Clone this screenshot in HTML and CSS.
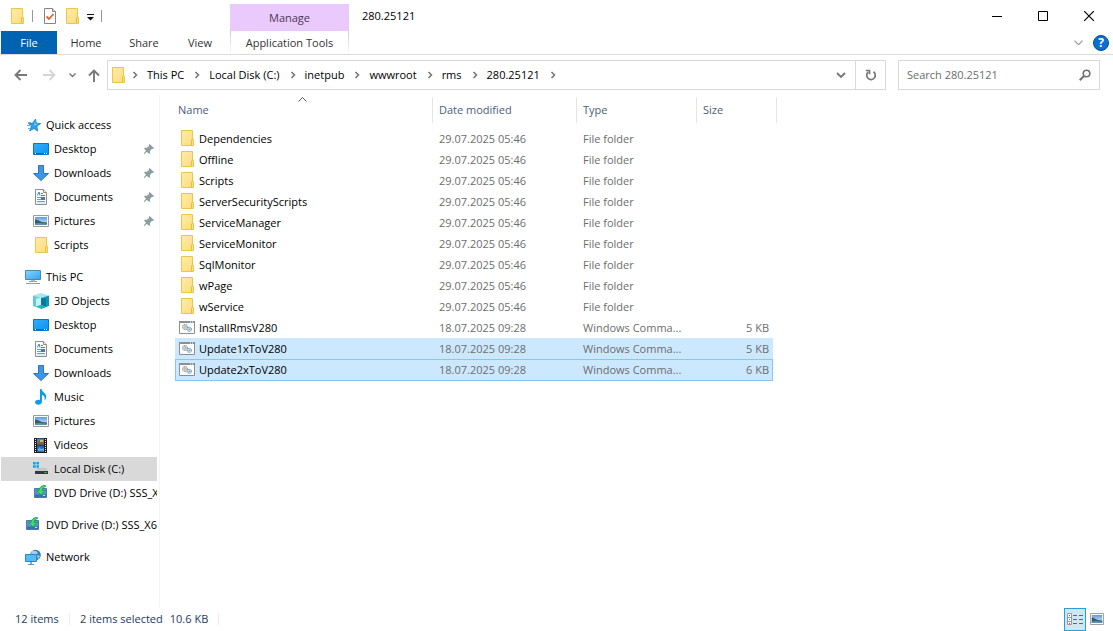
FILE: index.html
```html
<!DOCTYPE html>
<html lang="en">
<head>
<meta charset="utf-8">
<meta name="viewport" content="width=device-width, initial-scale=1">
<title>280.25121</title>
<link rel="stylesheet" href="styles.css">
</head>
<body>
<svg class="sprite" aria-hidden="true">
  <defs>
    <linearGradient id="g-folder" x1="0" y1="0" x2="1" y2="1"><stop offset="0" stop-color="#ffeba8"/><stop offset="1" stop-color="#fddd7b"/></linearGradient>
    <linearGradient id="g-blue" x1="0" y1="0" x2="1" y2="1"><stop offset="0" stop-color="#35aef7"/><stop offset="1" stop-color="#0a93f5"/></linearGradient>
    <linearGradient id="g-screen" x1="0" y1="0" x2="1" y2="1"><stop offset="0" stop-color="#8fd6ff"/><stop offset="1" stop-color="#2ba4ef"/></linearGradient>
    <linearGradient id="g-sky" x1="0" y1="0" x2="0" y2="1"><stop offset="0" stop-color="#5b9be0"/><stop offset="1" stop-color="#e3f1fb"/></linearGradient>
  </defs>
  <symbol id="folder" viewBox="0 0 16 16">
    <path d="M2.500.5h11v9h1v6h-12z" fill="url(#g-folder)" stroke="#ebc64f"/>
    <path d="M12.500 15V10l1-1" fill="none" stroke="#e6bd46"/>
  </symbol>
  <symbol id="cmd" viewBox="0 0 16 16">
    <path d="M.5 2.500h15v12H.5z" fill="#fff" stroke="#8a8f94"/>
    <path d="M0 2h16v2H0z" fill="#8a8f94"/><path d="M11 2.500h1v1h-1zM13 2.500h1v1h-1z" fill="#fff"/>
    <circle cx="6" cy="8" r="2.300" fill="#eee" stroke="#909497" stroke-width="1.300" stroke-dasharray="1.200 .5"/>
    <circle cx="6" cy="8" r=".8" fill="#888"/>
    <circle cx="10.300" cy="10.300" r="2" fill="#d8edf8" stroke="#7fa5b8" stroke-width="1.300" stroke-dasharray="1.200 .5"/>
    <circle cx="10.300" cy="10.300" r=".7" fill="#6395ae"/>
  </symbol>
  <symbol id="star" viewBox="0 0 16 16">
    <path d="M10.500 2l.8 4.200 4.500.3-3.800 2.700.6 5-3.600-2.700L4.600 14l1.600-4.500L3.500 6.300l4.200-.2z" fill="#2ea0ea" stroke="#1678c4" stroke-width=".7"/>
    <path d="M3 5.500h3M2 8.500h4M3 11.500h2" stroke="#6db9ea"/>
    <path d="M10 4l.6 3h2.600L9 9z" fill="#74ccff"/>
  </symbol>
  <symbol id="desktop" viewBox="0 0 16 16">
    <path d="M.5 2.500h15v11H.5z" fill="url(#g-blue)" stroke="#0776cb"/>
    <path d="M1 12.500h14" stroke="#0864b1"/><path d="M2 12.500h1M11 12.500h1M13 12.500h1" stroke="#fff"/>
  </symbol>
  <symbol id="down" viewBox="0 0 16 16">
    <path d="M5.500.5h5v8h5L8 15.600.5 8.500h5z" fill="#3d97e5" stroke="#2a77bd"/>
  </symbol>
  <symbol id="doc" viewBox="0 0 16 16">
    <path d="M2.500.5h8l3 3v12h-11z" fill="#fff" stroke="#8b8f93"/><path d="M10.500.5v3h3" fill="#eee" stroke="#8b8f93"/>
    <path d="M4.300 6.500l1.700-3.500 1 3.500M8 4.500h2M8 6.500h4" fill="none" stroke="#2788d0"/>
    <path d="M4 8.500h8M4 10.500h8M4 12.500h8" stroke="#6b9fc6"/><path d="M8 8h4v3H8z" fill="#2d83c6"/><path d="M4 14h8" stroke="#c5d5e0"/>
  </symbol>
  <symbol id="pic" viewBox="0 0 16 16">
    <path d="M.5 2.500h15v11H.5z" fill="#fff" stroke="#9a9a9a"/>
    <path d="M2 4h12v8H2z" fill="url(#g-sky)"/>
    <path d="M2 6.500c3 0 4 1.500 7 2.500l5 .5V12H2z" fill="#315c68"/><path d="M2 10.500c3-1 7-.5 12 0V12H2z" fill="#5b92b9"/>
  </symbol>
  <symbol id="pc" viewBox="0 0 16 16">
    <path d="M.5 1.500h15v9H.5z" fill="url(#g-screen)" stroke="#4a87ad"/>
    <path d="M6 11h4v1H6z" fill="#b3bcc2"/><path d="M4 12.500h8M1 14.500h14" stroke="#8f9fab"/>
  </symbol>
  <symbol id="cube" viewBox="0 0 16 16">
    <path d="M0 2.500L8 0l8 2.500L8 5z" fill="#a6e6ec"/><path d="M0 2.500L8 5v11l-8-3z" fill="#62cbd6"/><path d="M16 2.500L8 5v11l8-3z" fill="#0999b5"/>
    <path d="M3 5.500L8 5v7l-5 1.500z" fill="#c4f3f4"/><path d="M8 5l5 1v7.500L8 12z" fill="#0a7899"/><path d="M3 13.500L8 12l5 1.500L8 15z" fill="#23b3c8"/>
  </symbol>
  <symbol id="music" viewBox="0 0 16 16">
    <path d="M7 0h1.500c.3 3 5 4 4.800 8-.1 2-1.300 3-2 3.500C12.500 8 11 6.500 9 6v6.500c0 2-1.500 3.200-3.500 3.200S2 14.700 2 13.300c0-1.800 2.200-3 5-2.300z" fill="#0b9bf0"/>
  </symbol>
  <symbol id="video" viewBox="0 0 16 16">
    <path d="M1 1h13v15H1z" fill="#1d1d1d"/><path d="M4 1.500h7v6H4z" fill="#5180bb"/><path d="M4 8.500h7V15H4z" fill="#2c62a8"/>
    <path d="M4 6l3-3 1 2 3-1v3.500H4z" fill="#7b6450"/><path d="M7 3h3v2H7z" fill="#e3b54a"/><path d="M5 12l2-2 1 2 3-1v3H5z" fill="#5eabd8"/>
    <path d="M2.500 2v14M12.500 2v14" stroke="#f1f1f1" stroke-dasharray="1 1"/>
  </symbol>
  <symbol id="disk" viewBox="0 0 16 16">
    <path d="M0 1h2.700v2.500H0zM3.500 1H6v2.500H3.500zM0 4.300h2.700v2.500H0zM3.500 4.300H6v2.500H3.500z" fill="#00a9f0"/>
    <path d="M4 7h9l2 3H2z" fill="#c4c7c9"/><path d="M2 10h13v3H2z" fill="#343a3e"/><path d="M11.500 11h2v1h-2z" fill="#23e13a"/>
  </symbol>
  <symbol id="dvd" viewBox="0 0 16 16">
    <path d="M1.500 3.500h12v9h-12z" fill="#5a94cc" stroke="#4a78a8"/><path d="M2 9.500h11V12H2z" fill="#3f6fae"/><path d="M10 10h2v1h-2z" fill="#d2e6f5"/>
    <path d="M12.500.5C9 .3 6.200 2 6 5.500H3.500L8 10l4-4.500H9.300c0-2 .9-3.300 3.200-4z" fill="#3ddc6b" stroke="#18a046" stroke-width=".8"/>
  </symbol>
  <symbol id="network" viewBox="0 0 16 16">
    <circle cx="10.500" cy="6" r="5.300" fill="#397fae"/><path d="M7 2l4 0 2 2-3 3-4-2zM12 6l3 1-2 3z" fill="#a7cfdf"/>
    <path d="M.5 5.500h11v7H.5z" fill="#53bdf8" stroke="#2389cf"/><path d="M5 13h2v2H5z" fill="#8ac"/><path d="M3 15.500h6" stroke="#6296b8"/>
  </symbol>
  <symbol id="pin" viewBox="0 0 12 12">
    <path d="M6.500 1l4.500 4-1 1-1-.2-2 2.200v2.200l-.8.8-2.400-2.200L1.500 11l-.7-.7 2.200-2.600L1 5.500l.8-.8H4l2.200-1.900L5.700 2z" fill="#8d9ba5"/>
  </symbol>
  <symbol id="crumb" viewBox="0 0 6 8"><path d="M1.500 1L4.500 4l-3 3" fill="none" stroke="#737373" stroke-width="1.500"/></symbol>
</svg>

<header class="chrome">
  <div class="quickbar">
    <svg class="icon"><use href="#folder"/></svg>
    <span class="divider"></span>
    <button class="plain props" aria-label="Properties"><svg class="icon" viewBox="0 0 16 16"><path d="M2.500.5h8l3 3v12h-11z" fill="#fff" stroke="#858585"/><path d="M10.500.5v3h3" fill="#ddd" stroke="#858585"/><path d="M4.500 8.500L7 11l4.500-5" fill="none" stroke="#e9602a" stroke-width="1.800"/></svg></button>
    <button class="plain" aria-label="New folder"><svg class="icon"><use href="#folder"/></svg></button>
    <button class="plain more" aria-label="Customize toolbar"><svg width="7" height="7" viewBox="0 0 7 7"><path d="M0 0h7v1H0zM0 3h7L3.500 6.500z" fill="#111"/></svg></button>
    <span class="divider"></span>
  </div>
  <div class="context">Manage</div>
  <div class="titlebar">
    <h1 class="title">280.25121</h1>
    <div class="controls">
      <button class="plain" aria-label="Minimize"><svg width="10" height="10"><path d="M0 5.500h10" stroke="#000"/></svg></button>
      <button class="plain" aria-label="Maximize"><svg width="10" height="10"><path d="M.5.5h9v9h-9z" fill="none" stroke="#000"/></svg></button>
      <button class="plain" aria-label="Close"><svg width="10" height="10"><path d="M0 0l10 10M10 0L0 10" stroke="#000" stroke-width="1.200"/></svg></button>
    </div>
  </div>
  <div class="tabs">
    <button class="tab file">File</button>
    <button class="tab">Home</button>
    <button class="tab">Share</button>
    <button class="tab">View</button>
  </div>
  <button class="tab tools">Application Tools</button>
  <div class="ribbon-end">
    <button class="plain" aria-label="Expand the ribbon"><svg width="9" height="6"><path d="M.5.7l4 4 4-4" fill="none" stroke="#999" stroke-width="1.200"/></svg></button>
    <button class="plain help" aria-label="Help">?</button>
  </div>
</header>

<div class="navbar">
  <div class="arrows">
    <button class="plain" aria-label="Back"><svg width="13" height="12"><path d="M13 6H2M6.500 1L1.500 6l5 5" fill="none" stroke="#777" stroke-width="1.800"/></svg></button>
    <button class="plain" aria-label="Forward"><svg width="13" height="12"><path d="M0 6h11M6.500 1l5 5-5 5" fill="none" stroke="#d5d5d5" stroke-width="1.800"/></svg></button>
    <button class="plain" aria-label="Recent locations"><svg width="7" height="5"><path d="M.5.5l3 3 3-3" fill="none" stroke="#777" stroke-width="1.400"/></svg></button>
    <button class="plain" aria-label="Up"><svg width="12" height="13"><path d="M6 13V2M1 6.500l5-5 5 5" fill="none" stroke="#777" stroke-width="1.900"/></svg></button>
  </div>
  <div class="address">
    <svg class="icon"><use href="#folder"/></svg>
    <svg class="crumb first"><use href="#crumb"/></svg><button class="plain">This PC</button>
    <svg class="crumb"><use href="#crumb"/></svg><button class="plain">Local Disk (C:)</button>
    <svg class="crumb"><use href="#crumb"/></svg><button class="plain">inetpub</button>
    <svg class="crumb"><use href="#crumb"/></svg><button class="plain">wwwroot</button>
    <svg class="crumb"><use href="#crumb"/></svg><button class="plain">rms</button>
    <svg class="crumb"><use href="#crumb"/></svg><button class="plain">280.25121</button>
    <svg class="crumb"><use href="#crumb"/></svg>
    <button class="plain history" aria-label="Previous locations"><svg width="10" height="7"><path d="M1 1l4 4 4-4" fill="none" stroke="#777" stroke-width="1.900"/></svg></button>
    <button class="plain refresh" aria-label="Refresh"><svg width="12" height="12"><path d="M8.500 2.800A4.300 4.300 0 1 1 3 3.200M.8 1.500h3.700v3.700" fill="none" stroke="#777" stroke-width="1.700"/></svg></button>
  </div>
  <label class="search">
    <input type="search" placeholder="Search 280.25121" aria-label="Search 280.25121">
    <svg width="12" height="12"><circle cx="7.500" cy="4.500" r="3.300" fill="none" stroke="#707070" stroke-width="1.600"/><path d="M5.200 6.800L.8 11.200" stroke="#707070" stroke-width="2"/></svg>
  </label>
</div>

<div class="body">
  <nav class="side" aria-label="Navigation pane">
    <div class="group">
      <a class="node root" href="#"><svg class="icon"><use href="#star"/></svg><span>Quick access</span></a>
      <a class="node" href="#"><svg class="icon"><use href="#desktop"/></svg><span>Desktop</span><svg class="pin"><use href="#pin"/></svg></a>
      <a class="node" href="#"><svg class="icon"><use href="#down"/></svg><span>Downloads</span><svg class="pin"><use href="#pin"/></svg></a>
      <a class="node" href="#"><svg class="icon"><use href="#doc"/></svg><span>Documents</span><svg class="pin"><use href="#pin"/></svg></a>
      <a class="node" href="#"><svg class="icon"><use href="#pic"/></svg><span>Pictures</span><svg class="pin"><use href="#pin"/></svg></a>
      <a class="node" href="#"><svg class="icon"><use href="#folder"/></svg><span>Scripts</span></a>
    </div>
    <div class="group">
      <a class="node root" href="#"><svg class="icon"><use href="#pc"/></svg><span>This PC</span></a>
      <a class="node" href="#"><svg class="icon"><use href="#cube"/></svg><span>3D Objects</span></a>
      <a class="node" href="#"><svg class="icon"><use href="#desktop"/></svg><span>Desktop</span></a>
      <a class="node" href="#"><svg class="icon"><use href="#doc"/></svg><span>Documents</span></a>
      <a class="node" href="#"><svg class="icon"><use href="#down"/></svg><span>Downloads</span></a>
      <a class="node" href="#"><svg class="icon"><use href="#music"/></svg><span>Music</span></a>
      <a class="node" href="#"><svg class="icon"><use href="#pic"/></svg><span>Pictures</span></a>
      <a class="node" href="#"><svg class="icon"><use href="#video"/></svg><span>Videos</span></a>
      <a class="node current" href="#"><svg class="icon"><use href="#disk"/></svg><span>Local Disk (C:)</span></a>
      <a class="node" href="#"><svg class="icon"><use href="#dvd"/></svg><span>DVD Drive (D:) SSS_X6</span></a>
    </div>
    <div class="group">
      <a class="node root" href="#"><svg class="icon"><use href="#dvd"/></svg><span>DVD Drive (D:) SSS_X6</span></a>
    </div>
    <div class="group">
      <a class="node root" href="#"><svg class="icon"><use href="#network"/></svg><span>Network</span></a>
    </div>
  </nav>

  <main class="files">
    <table>
      <colgroup><col class="c-name"><col class="c-date"><col class="c-type"><col class="c-size"><col class="c-end"></colgroup>
      <thead>
        <tr><th scope="col">Name<svg class="sort" width="9" height="5"><path d="M.5 4.500l4-4 4 4" fill="none" stroke="#555"/></svg></th><th scope="col">Date modified</th><th scope="col">Type</th><th scope="col" class="size-head">Size</th><td></td></tr>
      </thead>
      <tbody>
        <tr><td><div class="name"><svg class="icon"><use href="#folder"/></svg>Dependencies</div></td><td>29.07.2025 05:46</td><td>File folder</td><td></td></tr>
        <tr><td><div class="name"><svg class="icon"><use href="#folder"/></svg>Offline</div></td><td>29.07.2025 05:46</td><td>File folder</td><td></td></tr>
        <tr><td><div class="name"><svg class="icon"><use href="#folder"/></svg>Scripts</div></td><td>29.07.2025 05:46</td><td>File folder</td><td></td></tr>
        <tr><td><div class="name"><svg class="icon"><use href="#folder"/></svg>ServerSecurityScripts</div></td><td>29.07.2025 05:46</td><td>File folder</td><td></td></tr>
        <tr><td><div class="name"><svg class="icon"><use href="#folder"/></svg>ServiceManager</div></td><td>29.07.2025 05:46</td><td>File folder</td><td></td></tr>
        <tr><td><div class="name"><svg class="icon"><use href="#folder"/></svg>ServiceMonitor</div></td><td>29.07.2025 05:46</td><td>File folder</td><td></td></tr>
        <tr><td><div class="name"><svg class="icon"><use href="#folder"/></svg>SqlMonitor</div></td><td>29.07.2025 05:46</td><td>File folder</td><td></td></tr>
        <tr><td><div class="name"><svg class="icon"><use href="#folder"/></svg>wPage</div></td><td>29.07.2025 05:46</td><td>File folder</td><td></td></tr>
        <tr><td><div class="name"><svg class="icon"><use href="#folder"/></svg>wService</div></td><td>29.07.2025 05:46</td><td>File folder</td><td></td></tr>
        <tr><td><div class="name"><svg class="icon"><use href="#cmd"/></svg>InstallRmsV280</div></td><td>18.07.2025 09:28</td><td>Windows Comma...</td><td>5 KB</td></tr>
        <tr class="selected"><td><div class="name"><svg class="icon"><use href="#cmd"/></svg>Update1xToV280</div></td><td>18.07.2025 09:28</td><td>Windows Comma...</td><td>5 KB</td></tr>
        <tr class="selected focused"><td><div class="name"><svg class="icon"><use href="#cmd"/></svg>Update2xToV280</div></td><td>18.07.2025 09:28</td><td>Windows Comma...</td><td>6 KB</td></tr>
      </tbody>
    </table>
  </main>
</div>

<footer class="status">
  <span class="count">12 items</span>
  <span class="chosen">2 items selected</span><span class="bytes">10.6 KB</span>
  <div class="views">
    <button class="plain view on" aria-label="Details view"><svg width="18" height="14"><path d="M1.500 1.500h4v11h-4zM1.500 5.500h4M1.500 9.500h4" fill="#fff" stroke="#999"/><path d="M3 3h1v1H3z" fill="#555"/><path d="M3 7h1v1H3z" fill="#2c86d9"/><path d="M3 11h1v1H3z" fill="#c33"/><path d="M7 3.500h4M13 3.500h4M7 7.500h4M13 7.500h4M7 11.500h4M13 11.500h4" stroke="#666"/></svg></button>
    <button class="plain view" aria-label="Large icons view"><svg width="14" height="16" viewBox="0 0 16 16" preserveAspectRatio="none"><use href="#pic"/></svg></button>
  </div>
</footer>
</body>
</html>
```
FILE: styles.css
```css
* { box-sizing: border-box; }

body {
  margin: 0;
  min-height: 100vh;
  display: flex;
  flex-direction: column;
  background: #fff;
  color: #000;
  font: 11px/16px "Open Sans", "Noto Sans", sans-serif;
}

svg { display: block; flex: none; }
.sprite { position: absolute; width: 0; height: 0; }
.icon { width: 16px; height: 16px; }

button, input { font: inherit; color: inherit; }
.plain {
  display: flex;
  align-items: center;
  justify-content: center;
  padding: 0;
  border: 0;
  background: none;
}

/* Title bar and ribbon tabs */
.chrome {
  display: grid;
  grid-template-columns: 230px 119px 1fr;
  grid-template-rows: 31px 24px;
  border-bottom: 1px solid #dadbdc;
  height: 55px;
}
.quickbar { display: flex; align-items: center; padding-left: 9px; }
.divider { width: 1px; height: 12px; background: #999; margin-left: 7px; }
.props { margin-left: 9px; }
.props + .plain { margin-left: 6px; }
.more { margin: 3px 0 0 7px; }
.context {
  margin-top: 4px;
  background: #eac9fc;
  color: #4b3a55;
  text-align: center;
  line-height: 27px;
}
.titlebar { display: flex; justify-content: space-between; }
.title { margin: 0 0 0 13px; font-size: 11px; font-weight: 400; line-height: 31px; }
.controls { display: flex; padding-right: 1px; }
.controls .plain { width: 46px; height: 31px; }
.tabs { display: flex; padding-left: 1px; }
.tab {
  width: 58px;
  height: 23px;
  padding: 0;
  border: 0;
  background: none;
  color: #333;
  text-align: center;
  line-height: 23px;
}
.tab.file { width: 56px; background: #0063b1; color: #fff; }
.tab:nth-child(4) { width: 54px; }
.tab.tools {
  width: auto;
  border: solid;
  border-width: 0 1px;
  border-image: linear-gradient(#c9c9c9, #fff) 1;
}
.ribbon-end { display: flex; align-items: center; justify-content: flex-end; gap: 10px; padding-right: 4px; }
.help {
  width: 16px;
  height: 16px;
  border: 1px solid #064b93;
  border-radius: 50%;
  background: #0a6fd0;
  color: #fff;
  font-weight: 700;
  font-size: 12px;
}

/* Address row */
.navbar { display: flex; align-items: center; height: 40px; padding-right: 13px; }
.arrows { display: flex; align-items: center; width: 107px; padding-left: 14px; gap: 16px; }
.arrows .plain:nth-child(3) { margin-left: -3px; }
.arrows .plain:nth-child(4) { margin-left: -4px; }
.address {
  flex: 1;
  display: flex;
  align-items: center;
  height: 30px;
  border: 1px solid #d9d9d9;
  padding-left: 2px;
}
.crumb { width: 6px; height: 8px; margin: 0 9px 0 10px; }
.crumb.first { margin-left: 6px; }
.history { margin-left: auto; width: 29px; height: 28px; }
.refresh { width: 30px; height: 28px; border-left: 1px solid #d9d9d9; }
.search {
  display: flex;
  align-items: center;
  width: 202px;
  height: 30px;
  margin-left: 12px;
  padding: 0 8px;
  border: 1px solid #d9d9d9;
}
.search input { flex: 1; min-width: 0; padding: 0; border: 0; outline: 0; background: none; }
.search input::placeholder { color: #6d6d6d; opacity: 1; }

/* Navigation pane */
.body { flex: 1; display: flex; }
.side {
  flex: none;
  width: 160px;
  padding: 18px 2px 0 1px;
  border-right: 1px solid #f3f3f3;
}
.group { margin-bottom: 8px; }
.node {
  display: flex;
  align-items: center;
  gap: 5px;
  height: 24px;
  padding-left: 32px;
  overflow: hidden;
  white-space: nowrap;
  color: #000;
  text-decoration: none;
}
.node.root { padding-left: 24px; }
.node.current { background: #d9d9d9; }
.pin { width: 12px; height: 12px; margin: 0 2px 0 auto; }

/* File list */
.files { flex: 1; min-width: 0; padding: 2px 0 0 15px; }
table { width: 602px; table-layout: fixed; border-collapse: separate; border-spacing: 0; }
.c-name { width: 258px; }
.c-date { width: 144px; }
.c-type { width: 120px; }
.c-size { width: 76px; }
.c-end { width: 4px; }
th, td { padding: 0 6px; height: 21px; text-align: left; white-space: nowrap; }
thead th {
  position: relative;
  height: 26px;
  border-right: 1px solid #e5e5e5;
  color: #4c607a;
  font-weight: 400;
}
thead th:first-child { padding-left: 3px; }
thead th.size-head { border-right: 0; }
thead td { padding: 0; border-right: 1px solid #e5e5e5; }
.sort { position: absolute; top: 0; left: 50%; margin-left: -6px; }
tbody::before { content: ""; display: block; height: 5px; }
tbody td { color: #6d6d6d; }
tbody td:first-child { padding-left: 4px; color: #000; }
tbody td:nth-child(4) { padding-right: 4px; text-align: right; }
.name { display: flex; align-items: center; gap: 4px; height: 18px; }
.name .icon { align-self: flex-start; }
.selected td { background: #cce8ff; }
.focused td { height: 22px; border: solid #84c5fb; border-width: 1px 0; }
.focused td:first-child { border-left-width: 1px; padding-left: 3px; }
.focused td:last-child { border-right-width: 1px; padding-right: 3px; }

/* Status bar */
.status { display: flex; align-items: center; height: 24px; padding: 0 6px 0 15px; color: #1e395b; }
.count { width: 55px; border-right: 1px solid #eee; line-height: 12px; }
.chosen { padding-left: 10px; }
.bytes { margin-left: 7px; padding-right: 10px; border-right: 1px solid #eee; line-height: 12px; }
.views { display: flex; margin-left: auto; }
.view { width: 21px; height: 23px; }
.view.on { width: 22px; border: 1px solid #26a0da; background: #cbe8f6; }
```
